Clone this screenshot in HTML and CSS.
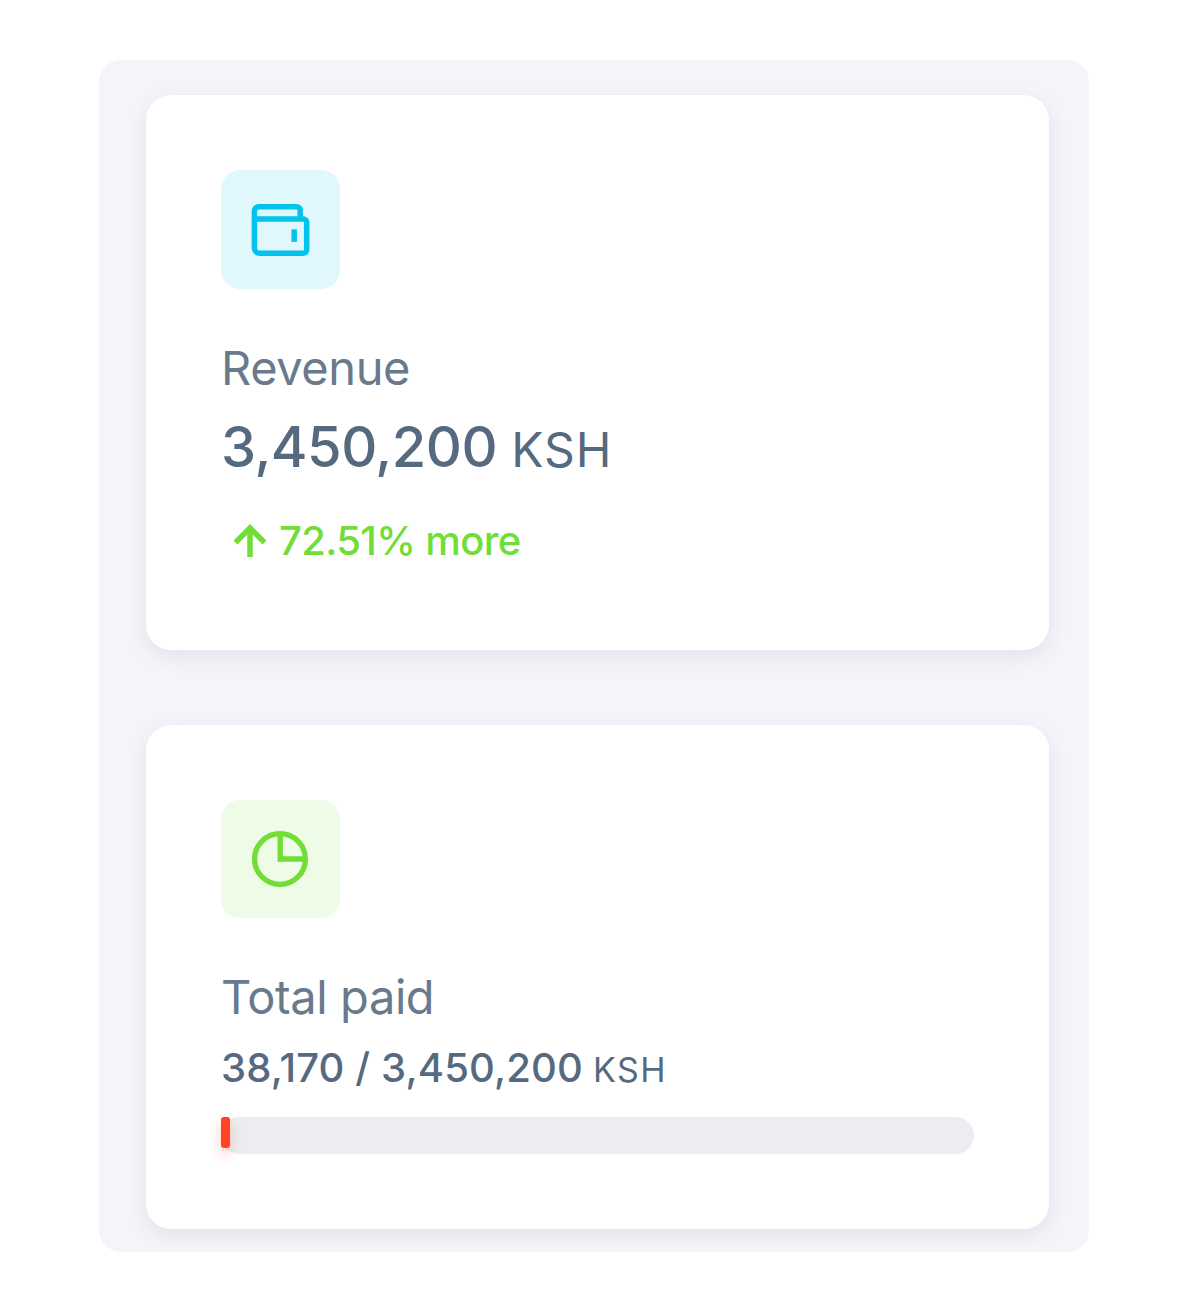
FILE: index.html
```html
<!DOCTYPE html>
<html lang="en">

<head>
    <meta charset="UTF-8" />
    <meta name="viewport" content="width=device-width, initial-scale=1.0" />
    <title>Revenue overview</title>
    <link rel="stylesheet" href="styles.css">
</head>

<body>
    <main class="panel">
        <section class="card revenue">
            <div class="icon icon-info">
                <svg viewBox="0 0 119 119" fill="none" stroke="currentColor" stroke-width="5.5">
                    <path d="M33.400 49.400V41a4.300 4.300 0 0 1 4.300-4.300h38a3.500 3.500 0 0 1 3.500 3.500v8.500M33.400 41v37a5.300 5.300 0 0 0 5.300 5.300h43.500a3.500 3.500 0 0 0 3.500-3.500V52.500a3.500 3.500 0 0 0-3.500-3.500H33.400" />
                    <path d="M73.200 59.300v12.600" />
                </svg>
            </div>
            <span class="label">Revenue</span>
            <h3 class="amount"><span class="num">3,450,200</span><small>KSH</small></h3>
            <div class="trend">
                <svg viewBox="0 0 34 34" fill="none" stroke="currentColor" stroke-width="5.5">
                    <path d="M17 33V4M2.500 18.500L17 4l14.500 14.500" />
                </svg>
                <span>72.51% more</span>
            </div>
        </section>

        <section class="card paid">
            <div class="icon icon-success">
                <svg viewBox="0 0 119 119" fill="none" stroke="currentColor" stroke-width="5.3">
                    <circle cx="59" cy="59" r="25.400" />
                    <path d="M59.200 34v25H84" />
                </svg>
            </div>
            <span class="label">Total paid</span>
            <h5 class="amount"><span class="num">38,170 / 3,450,200</span><small>KSH</small></h5>
            <div class="progress">
                <div class="progress-bar" style="width: 1.2%"></div>
            </div>
        </section>
    </main>
</body>

</html>
```
FILE: styles.css
```css
* {
    box-sizing: border-box;
}

body {
    font-family: Inter, "Liberation Sans", sans-serif;
    background: #fff;
    margin: 0;
    padding: 60px 99px 0;
    color: #566a7f;
}

.panel {
    height: 1192px;
    padding: 35px 40px 0 47px;
    background: #f4f4f9;
    border-radius: 22px;
    display: flex;
    flex-direction: column;
    gap: 75px;
}

.card {
    background: #fff;
    border-radius: 25px;
    padding: 75px;
    box-shadow: 0 6px 19px rgba(67, 89, 113, 0.1);
    display: flex;
    flex-direction: column;
    align-items: flex-start;
}

.revenue {
    height: 555px;
}

.paid {
    height: 504px;
}

.icon {
    width: 119px;
    height: 119px;
    border-radius: 19px;
}

.icon svg {
    display: block;
}

.icon-info {
    background: #e0f7fc;
    color: #03c3ec;
}

.icon-success {
    height: 118px;
    background: #edfbe7;
    color: #71dd37;
}

.label {
    margin-top: 43px;
    font-size: 47px;
    line-height: 72px;
    letter-spacing: -0.4px;
    color: #697a8d;
}

.amount {
    display: flex;
    align-items: baseline;
    margin: 0;
    font-weight: 500;
    white-space: nowrap;
}

.amount small {
    font-weight: 400;
}

.revenue .amount {
    margin-top: 5px;
    font-size: 56px;
    line-height: 76px;
    letter-spacing: -0.5px;
}

.revenue small {
    margin-left: 14px;
    font-size: 48px;
    letter-spacing: 1px;
}

.trend {
    display: flex;
    align-items: center;
    gap: 12px;
    margin: 25px 0 0 12px;
    font-size: 40px;
    font-weight: 500;
    line-height: 56px;
    letter-spacing: -0.65px;
    color: #71dd37;
}

.trend svg {
    width: 34px;
    height: 34px;
}

.paid .amount {
    margin-top: 5px;
    font-size: 40px;
    line-height: 60px;
    letter-spacing: 0.15px;
}

.paid small {
    margin-left: 10px;
    font-size: 34px;
    letter-spacing: 1.5px;
}

.progress {
    width: 100%;
    height: 37px;
    margin-top: 17px;
    background: #ebedf0;
    border-radius: 19px;
}

.progress-bar {
    height: 31px;
    background: #ff4422;
    border-radius: 3px;
    box-shadow: 0 6px 12px rgba(255, 62, 29, 0.3);
}
```
